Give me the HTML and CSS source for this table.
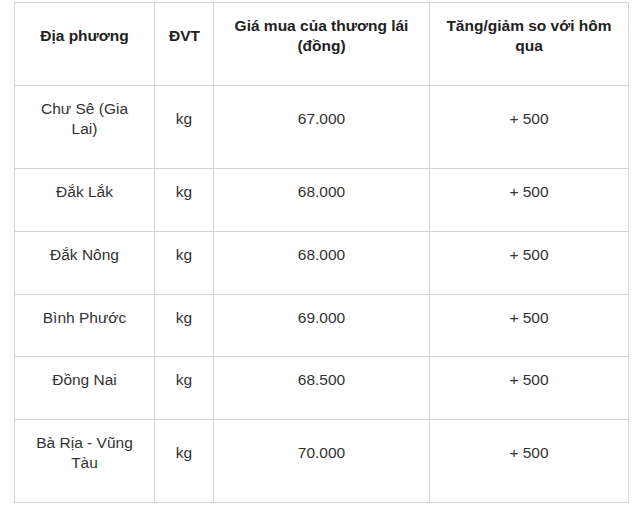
FILE: index.html
```html
<!DOCTYPE html>
<html lang="vi">
<head>
<meta charset="utf-8">
<title>Giá</title>
<link rel="stylesheet" href="styles.css">
</head>
<body>
<table class="price-table">
  <colgroup>
    <col class="c1"><col class="c2"><col class="c3"><col class="c4">
  </colgroup>
  <thead>
    <tr>
      <th>Địa phương</th>
      <th>ĐVT</th>
      <th>Giá mua của thương lái (đồng)</th>
      <th>Tăng/giảm so với hôm qua</th>
    </tr>
  </thead>
  <tbody>
    <tr><td>Chư Sê (Gia Lai)</td><td>kg</td><td>67.000</td><td>+ 500</td></tr>
    <tr><td>Đắk Lắk</td><td>kg</td><td>68.000</td><td>+ 500</td></tr>
    <tr><td>Đắk Nông</td><td>kg</td><td>68.000</td><td>+ 500</td></tr>
    <tr class="short"><td>Bình Phước</td><td>kg</td><td>69.000</td><td>+ 500</td></tr>
    <tr><td>Đồng Nai</td><td>kg</td><td>68.500</td><td>+ 500</td></tr>
    <tr><td>Bà Rịa - Vũng Tàu</td><td>kg</td><td>70.000</td><td>+ 500</td></tr>
  </tbody>
</table>
</body>
</html>
```
FILE: styles.css
```css
html, body {
  margin: 0;
  padding: 0;
  background: #ffffff;
}
body {
  font-family: "Liberation Sans", Arial, sans-serif;
  font-size: 15.5px;
  line-height: 20px;
  color: #333333;
}
.price-table {
  border-collapse: collapse;
  table-layout: fixed;
  width: 614px;
  margin: 2px 0 0 14px;
}
.c1 { width: 140px; }
.c2 { width: 59px; }
.c3 { width: 216px; }
.c4 { width: 199px; }
.price-table th,
.price-table td {
  border: 1px solid #d4d4d4;
  padding: 13px 14px 29px;
  text-align: center;
  vertical-align: middle;
}
.price-table th {
  font-weight: bold;
  color: #222222;
  height: 40px;
}
.price-table td {
  height: 20px;
}
.price-table tr.short td {
  padding-bottom: 28px;
}
```
